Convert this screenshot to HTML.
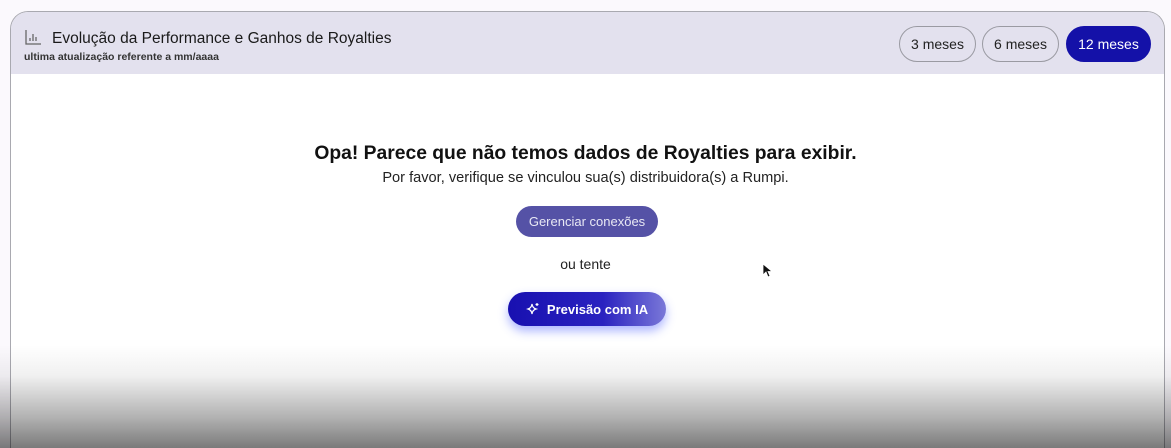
<!DOCTYPE html>
<html><head><meta charset="utf-8"><style>
*{box-sizing:border-box;margin:0;padding:0}
html,body{width:1171px;height:448px;overflow:hidden}
body{background:#fbf9fd;font-family:"Liberation Sans",sans-serif;position:relative}
.card{position:absolute;left:10px;top:11px;width:1155px;height:437px;border:1.5px solid #a9a9b0;border-bottom:none;border-radius:18px 18px 0 0;background:#fff;overflow:hidden}
.hdr{height:62px;background:#e3e1ee;position:relative}
.title{position:absolute;left:41px;top:18px;font-size:15.5px;color:#1a1a1a;font-weight:500}
.sub{position:absolute;left:13px;top:39px;font-size:10.5px;color:#333;font-weight:bold}
.ico{position:absolute;left:14px;top:17px}
.btn{position:absolute;top:14px;height:36px;border-radius:18px;border:1.5px solid #9a9aa2;font-size:14px;color:#222;display:flex;align-items:center;justify-content:center}
.main{position:absolute;left:0;width:1171px;text-align:center}
.fade{position:absolute;left:0;top:345px;width:1171px;height:103px;background:linear-gradient(to bottom,rgba(0,0,0,0),rgba(0,0,0,0.06) 30%,rgba(0,0,0,0.3) 70%,rgba(0,0,0,0.52))}
</style></head><body>
<div class="card">
 <div class="hdr">
  <svg class="ico" width="17" height="16" viewBox="0 0 17 16" fill="none" stroke="#666" stroke-width="1.3"><path d="M1 1V15H16"/><path d="M5 12V9M8 12V5M11 12V8"/></svg>
  <div class="title">Evolução da Performance e Ganhos de Royalties</div>
  <div class="sub">ultima atualização referente a mm/aaaa</div>
  <div class="btn" style="left:888px;width:77px">3 meses</div>
  <div class="btn" style="left:971px;width:77px">6 meses</div>
  <div class="btn" style="left:1055px;width:85px;background:#1411a8;border-color:#1411a8;color:#fff">12 meses</div>
 </div>
</div>
<div class="main" style="top:143px;font-size:19.3px;font-weight:bold;color:#111">Opa! Parece que não temos dados de Royalties para exibir.</div>
<div class="main" style="top:170px;font-size:14.6px;color:#222">Por favor, verifique se vinculou sua(s) distribuidora(s) a Rumpi.</div>
<div style="position:absolute;left:516px;top:206px;width:142px;height:31px;border-radius:16px;background:#5552a6;color:#e8e8f4;font-size:13px;display:flex;align-items:center;justify-content:center">Gerenciar conexões</div>
<div class="main" style="top:256px;font-size:14px;color:#222">ou tente</div>
<div style="position:absolute;left:508px;top:292px;width:158px;height:34px;border-radius:17px;background:linear-gradient(90deg,#1810b0,#2a22c0 60%,#7a78d8);box-shadow:0 5px 10px rgba(70,90,255,0.45);color:#fff;font-size:13px;font-weight:bold;display:flex;align-items:center;justify-content:center;gap:7px">
 <svg width="14" height="14" viewBox="0 0 14 14" fill="none" stroke="#fff" stroke-width="1.2"><path d="M6 2Q6.5 6 10 7Q6.5 8 6 12Q5.5 8 2 7Q5.5 6 6 2Z"/><path d="M11 1V4M9.5 2.5H12.5"/></svg>Previsão com IA</div>
<svg style="position:absolute;left:762px;top:263px" width="10" height="15" viewBox="0 0 10 15"><path d="M1 1V12L4 9L6 14L8 13L6 8.5H10Z" fill="#111" stroke="#fff" stroke-width="0.8"/></svg>
<div class="fade"></div>
</body></html>
